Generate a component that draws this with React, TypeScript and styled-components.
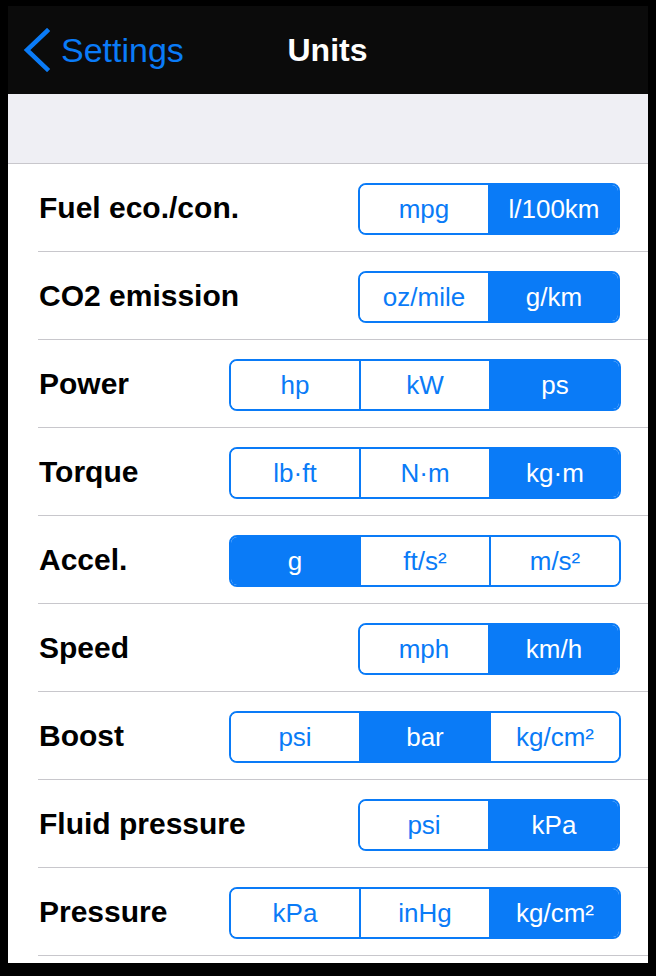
import React from "react";
import styled, { createGlobalStyle } from "styled-components";

const Global = createGlobalStyle`
  html, body { margin: 0; padding: 0; background: #000; }
  body { font-family: "Liberation Sans", Arial, Helvetica, sans-serif; }
`;

const BLUE = "#0a7bf7";

const Frame = styled.div`
  width: 640px;
  height: 957px;
  margin: 6px 8px 0 8px;
  background: #fff;
  overflow: hidden;
  display: flex;
  flex-direction: column;
`;

const NavBar = styled.div`
  height: 88px;
  flex-shrink: 0;
  background: #0b0b0b;
  position: relative;
  display: flex;
  align-items: center;
  justify-content: center;
`;

const BackButton = styled.div`
  position: absolute;
  left: 15px;
  top: 0;
  bottom: 0;
  display: flex;
  align-items: center;
  gap: 10px;
  color: ${BLUE};
  font-size: 34px;
`;

const Title = styled.div`
  color: #fff;
  font-size: 32px;
  font-weight: bold;
  margin-left: -1px;
`;

const Spacer = styled.div`
  height: 69px;
  flex-shrink: 0;
  background: #efeff4;
  border-bottom: 1px solid #c8c7cc;
`;

const List = styled.div`
  display: flex;
  flex-direction: column;
  padding-left: 30px;
`;

const Row = styled.div`
  height: 87px;
  flex-shrink: 0;
  border-bottom: 1px solid #c8c7cc;
  display: flex;
  align-items: center;
  justify-content: space-between;
  padding-right: 27px;
`;

const Label = styled.div`
  font-size: 30px;
  font-weight: bold;
  color: #000;
  padding-left: 1px;
`;

const Segmented = styled.div<{ $count: number }>`
  display: flex;
  border: 2px solid ${BLUE};
  border-radius: 8px;
  overflow: hidden;
  height: 48px;
  margin-top: 2px;
  margin-right: ${(p) => (p.$count === 2 ? 1 : 0)}px;
`;

const Segment = styled.div<{ $active: boolean }>`
  width: 128px;
  display: flex;
  align-items: center;
  justify-content: center;
  font-size: 26px;
  padding-top: 2px;
  background: ${(p) => (p.$active ? BLUE : "#fff")};
  color: ${(p) => (p.$active ? "#fff" : BLUE)};
  & + & {
    border-left: 2px solid ${BLUE};
  }
`;

const rows: { label: string; options: string[]; active: number }[] = [
  { label: "Fuel eco./con.", options: ["mpg", "l/100km"], active: 1 },
  { label: "CO2 emission", options: ["oz/mile", "g/km"], active: 1 },
  { label: "Power", options: ["hp", "kW", "ps"], active: 2 },
  { label: "Torque", options: ["lb·ft", "N·m", "kg·m"], active: 2 },
  { label: "Accel.", options: ["g", "ft/s²", "m/s²"], active: 0 },
  { label: "Speed", options: ["mph", "km/h"], active: 1 },
  { label: "Boost", options: ["psi", "bar", "kg/cm²"], active: 1 },
  { label: "Fluid pressure", options: ["psi", "kPa"], active: 1 },
  { label: "Pressure", options: ["kPa", "inHg", "kg/cm²"], active: 2 },
];

export default function App() {
  return (
    <>
      <Global />
      <Frame>
        <NavBar>
          <BackButton>
            <svg width="28" height="44" viewBox="0 0 28 44">
              <polyline
                points="24,3 4,22 24,41"
                fill="none"
                stroke={BLUE}
                strokeWidth="4.5"
                strokeLinecap="square"
              />
            </svg>
            <span>Settings</span>
          </BackButton>
          <Title>Units</Title>
        </NavBar>
        <Spacer />
        <List>
          {rows.map((r) => (
            <Row key={r.label}>
              <Label>{r.label}</Label>
              <Segmented $count={r.options.length}>
                {r.options.map((o, i) => (
                  <Segment key={o} $active={i === r.active}>
                    {o}
                  </Segment>
                ))}
              </Segmented>
            </Row>
          ))}
        </List>
      </Frame>
    </>
  );
}
